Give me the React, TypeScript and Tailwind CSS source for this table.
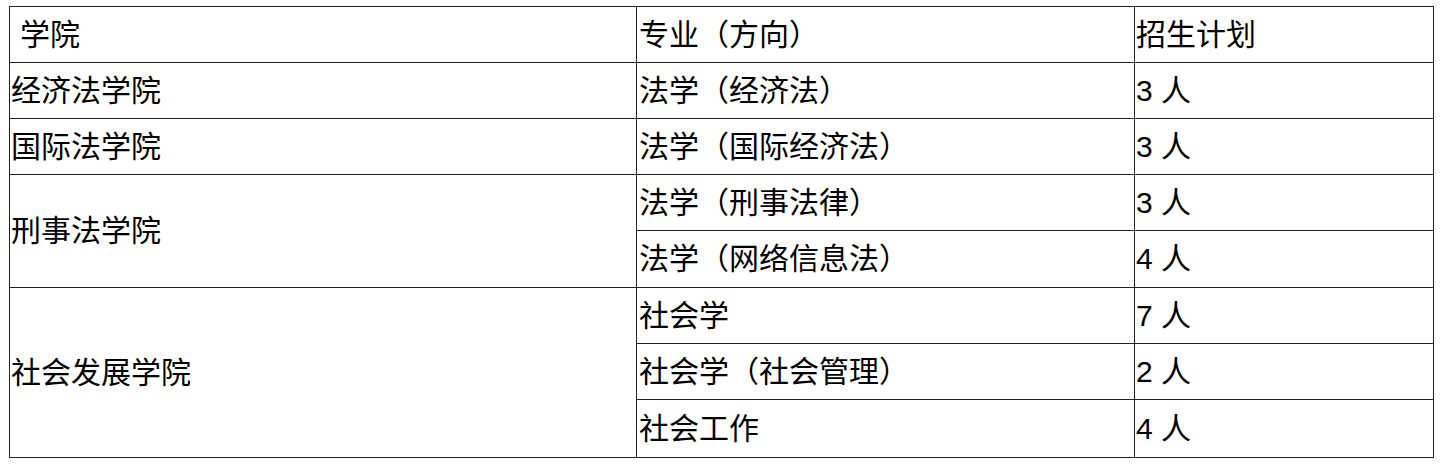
import React from "react";

type Row = { school?: string; span?: number; major: string; plan: string; h: string };

const rows: Row[] = [
  { school: "经济法学院", span: 1, major: "法学（经济法）", plan: "3 人", h: "h-[56px]" },
  { school: "国际法学院", span: 1, major: "法学（国际经济法）", plan: "3 人", h: "h-[56px]" },
  { school: "刑事法学院", span: 2, major: "法学（刑事法律）", plan: "3 人", h: "h-[56px]" },
  { major: "法学（网络信息法）", plan: "4 人", h: "h-[57px]" },
  { school: "社会发展学院", span: 3, major: "社会学", plan: "7 人", h: "h-[56px]" },
  { major: "社会学（社会管理）", plan: "2 人", h: "h-[56px]" },
  { major: "社会工作", plan: "4 人", h: "h-[58px]" },
];

export default function App() {
  const cell = "border border-[#222] p-0 align-middle leading-none";
  return (
    <div
      className="w-[1440px] h-[465px] bg-white pt-[6px] pl-[9px] text-black text-[30px]"
      style={{ fontFamily: '"Liberation Sans", "Noto Sans CJK SC", sans-serif' }}
    >
      <table className="table-fixed border-collapse w-[1424px]">
        <colgroup>
          <col className="w-[627px]" />
          <col className="w-[498px]" />
          <col className="w-[299px]" />
        </colgroup>
        <tbody>
          <tr className="h-[56px]">
            <td className={`${cell} pl-[10px]`}>学院</td>
            <td className={`${cell} pl-[2px]`}>专业（方向）</td>
            <td className={`${cell} pl-[1px]`}>招生计划</td>
          </tr>
          {rows.map((r, i) => (
            <tr key={i} className={r.h}>
              {r.school && (
                <td rowSpan={r.span} className={`${cell} pl-[1px]`}>
                  {r.school}
                </td>
              )}
              <td className={`${cell} pl-[2px]`}>{r.major}</td>
              <td className={`${cell} pl-[1px]`}>{r.plan}</td>
            </tr>
          ))}
        </tbody>
      </table>
    </div>
  );
}
